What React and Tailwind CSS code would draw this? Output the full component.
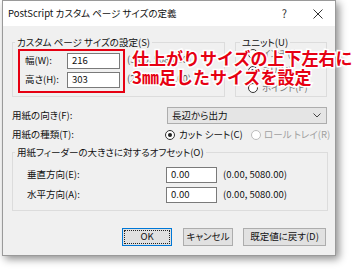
export default function App() {
  const Radio = ({ checked, disabled }) => (
    <span
      className={`flex h-[10px] w-[10px] shrink-0 items-center justify-center rounded-full border bg-white ${
        disabled ? "border-[#bcbcbc]" : "border-[#333]"
      }`}
    >
      {checked && <span className="h-[4px] w-[4px] rounded-full bg-[#222]" />}
    </span>
  );
  const Input = ({ value, w }) => (
    <div className={`flex h-[16px] ${w} items-center border border-[#7a7a7a] bg-white pl-[4px]`}>{value}</div>
  );
  const Btn = ({ children, w, focus }) => (
    <div
      className={`flex h-[18px] ${w} border bg-[#e1e1e1] ${focus ? "border-[#0078d7] p-[1px]" : "border-[#adadad]"}`}
    >
      <div className={`flex flex-1 items-center justify-center ${focus ? "border border-dotted border-[#222]" : ""}`}>
        {children}
      </div>
    </div>
  );
  return (
    <div className="relative h-[271px] w-[361px] overflow-hidden bg-white font-['Noto_Sans_CJK_JP','Noto_Sans',sans-serif] text-[9.5px] leading-none text-[#111] [font-feature-settings:'palt']">
      <div className="ml-[2px] flex h-[256px] w-[334px] flex-col border border-[#9a9a9a] bg-[#f0f0f0] shadow-[3px_3px_8px_rgba(0,0,0,0.45)]">
        {/* title bar */}
        <div className="flex h-[25px] shrink-0 items-center bg-white pl-[5px]">
          <span>PostScript カスタム ページ サイズの定義</span>
          <span className="ml-auto text-[11px] text-[#333]">?</span>
          <svg width="10" height="10" viewBox="0 0 10 10" className="ml-[26px] mr-[12px]">
            <path d="M0.5 0.5 L9.5 9.5 M9.5 0.5 L0.5 9.5" stroke="#333" strokeWidth="1" fill="none" />
          </svg>
        </div>

        {/* top row */}
        <div className="mt-[10px] flex pl-[9px]">
          <fieldset className="h-[61px] w-[213px] border border-[#dcdcdc]">
            <legend className="ml-[2px] px-[2px] leading-[12px]">カスタム ページ サイズの設定(S)</legend>
            <div className="flex">
              <div className="ml-[5px] mt-[1px] flex h-[44px] w-[107px] flex-col gap-[3px] border-2 border-[#e60012] pl-[5px] pt-[2px]">
                <div className="flex h-[16px] items-center">
                  <span className="w-[42px]">幅(W):</span>
                  <Input value="216" w="w-[53px]" />
                </div>
                <div className="flex h-[16px] items-center">
                  <span className="w-[42px]">高さ(H):</span>
                  <Input value="303" w="w-[53px]" />
                </div>
              </div>
              <div className="ml-[2px] mt-[4px] flex flex-col gap-[3px] text-[#555]">
                <div className="flex h-[16px] items-center">(3.00, 5080.00)</div>
                <div className="flex h-[16px] items-center">(2.00, 5080.00)</div>
              </div>
            </div>
          </fieldset>
          <fieldset className="ml-[10px] h-[61px] w-[92px] border border-[#dcdcdc]">
            <legend className="ml-[4px] px-[2px] leading-[12px]">ユニット(U)</legend>
            <div className="flex flex-col gap-[7px] pl-[12px] pt-[1px] text-[#777]">
              <div className="flex items-center gap-[4px]"><Radio />インチ(I)</div>
              <div className="flex items-center gap-[4px]"><Radio checked />ミリ(M)</div>
              <div className="flex items-center gap-[4px]"><Radio />ポイント(P)</div>
            </div>
          </fieldset>
        </div>

        {/* orientation */}
        <div className="mt-[10px] flex h-[17px] items-center pl-[9px]">
          <span className="w-[155px]">用紙の向き(F):</span>
          <div className="flex h-[17px] w-[160px] items-center border border-[#adadad] bg-[#e5e5e5] pl-[4px] pr-[5px]">
            <span>長辺から出力</span>
            <svg width="8" height="5" viewBox="0 0 8 5" className="ml-auto">
              <path d="M0.5 0.5 L4 4 L7.5 0.5" stroke="#444" strokeWidth="1" fill="none" />
            </svg>
          </div>
        </div>

        {/* paper type */}
        <div className="mt-[3px] flex h-[16px] items-center pl-[9px]">
          <span className="w-[153px]">用紙の種類(T):</span>
          <div className="flex w-[86px] items-center gap-[4px]">
            <Radio checked />
            <span>カット シート(C)</span>
          </div>
          <div className="flex items-center gap-[3px] text-[#a0a0a0]">
            <Radio disabled />
            <span>ロール トレイ(R)</span>
          </div>
        </div>

        {/* offset */}
        <fieldset className="ml-[9px] mt-[3px] h-[65px] w-[316px] border border-[#dcdcdc]">
          <legend className="ml-[2px] px-[2px] leading-[12px]">用紙フィーダーの大きさに対するオフセット(O)</legend>
          <div className="flex flex-col gap-[4px] pl-[14px] pt-[9px]">
            <div className="flex h-[16px] items-center">
              <span className="w-[139px]">垂直方向(E):</span>
              <Input value="0.00" w="w-[51px]" />
              <span className="ml-[6px]">(0.00, 5080.00)</span>
            </div>
            <div className="flex h-[16px] items-center">
              <span className="w-[139px]">水平方向(A):</span>
              <Input value="0.00" w="w-[51px]" />
              <span className="ml-[6px]">(0.00, 5080.00)</span>
            </div>
          </div>
        </fieldset>

        {/* buttons */}
        <div className="mt-[17px] flex justify-end pr-[9px]">
          <Btn w="w-[50px]" focus>OK</Btn>
          <div className="ml-[11px]"><Btn w="w-[50px]">キャンセル</Btn></div>
          <div className="ml-[10px]"><Btn w="w-[83px]">既定値に戻す(D)</Btn></div>
        </div>
      </div>

      {/* annotation */}
      <div className="absolute left-[132px] top-[48px] whitespace-nowrap text-[17px] font-bold leading-[19px] text-[#e60012] [font-feature-settings:normal] [-webkit-text-stroke:3px_white] [paint-order:stroke_fill]">
        <div>仕上がりサイズの上下左右に</div>
        <div>3㎜足したサイズを設定</div>
      </div>
    </div>
  );
}
